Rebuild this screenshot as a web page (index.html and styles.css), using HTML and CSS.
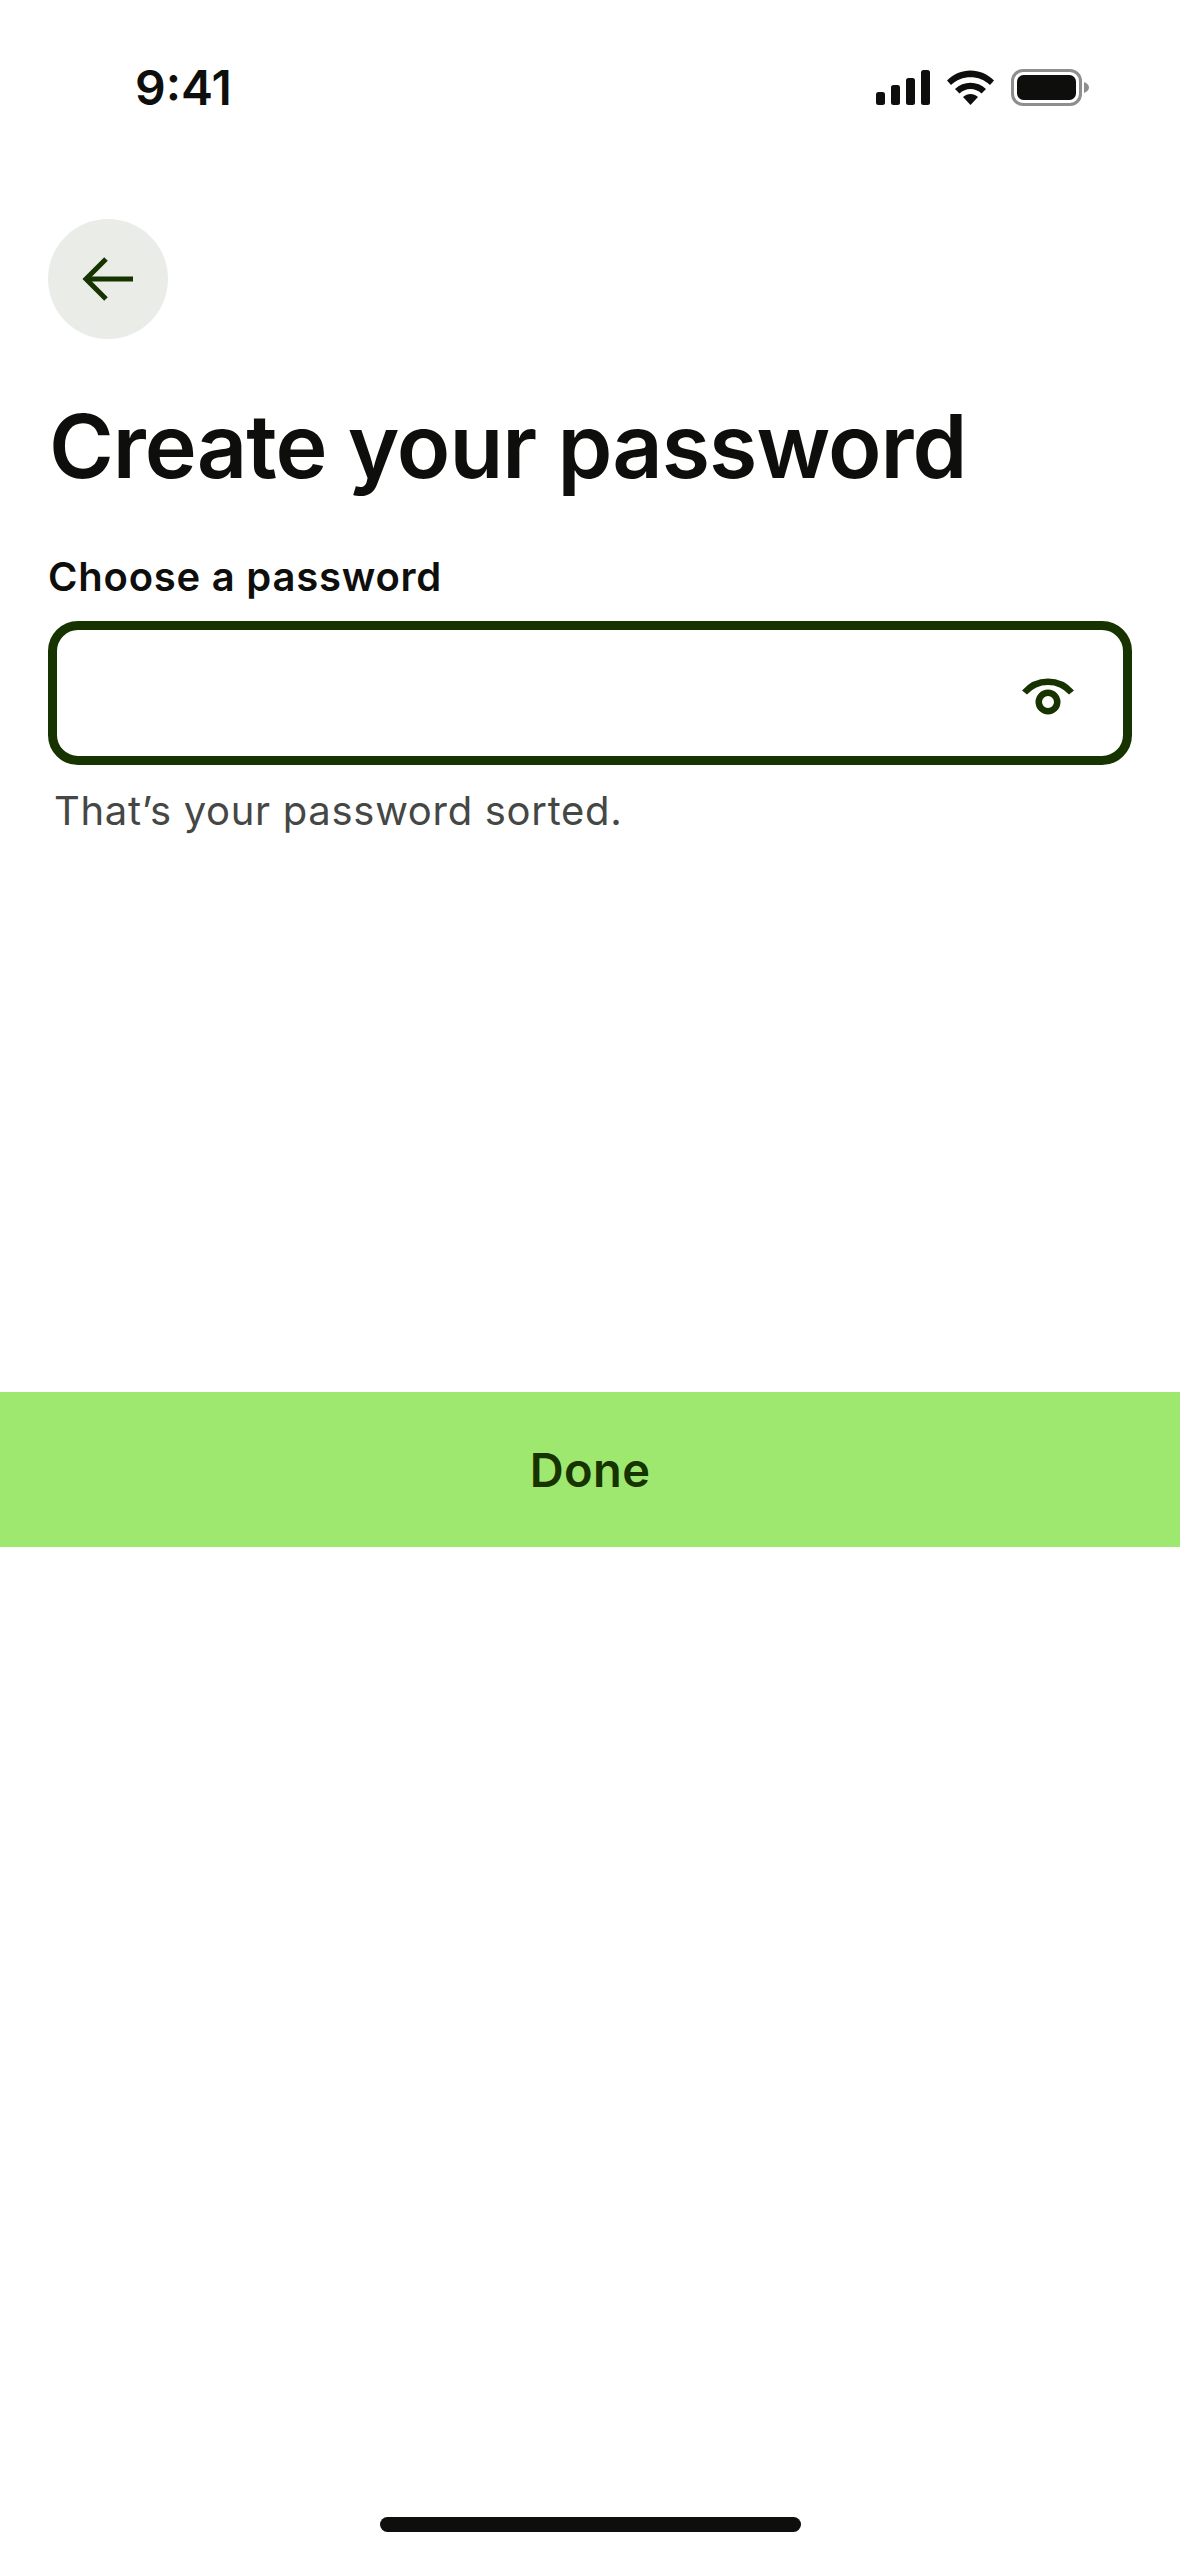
FILE: index.html

```html
<!DOCTYPE html>
<html lang="en">
<head>
  <meta charset="UTF-8">
  <meta name="viewport" content="width=device-width, initial-scale=1.0">
  <title>Create your password</title>
  <link rel="stylesheet" href="styles.css">
</head>
<body>

<div class="screen">
  <!-- Status bar -->
  <div class="status-bar">
    <span class="time">9:41</span>
    <div class="status-icons">
      <svg class="signal" width="54" height="35" viewBox="0 0 54 35">
        <rect x="0" y="22" width="9" height="13" rx="2.500"/>
        <rect x="15" y="15" width="9" height="20" rx="2.500"/>
        <rect x="30" y="8" width="9" height="27" rx="2.500"/>
        <rect x="45" y="0" width="9" height="35" rx="2.500"/>
      </svg>
      <svg class="wifi" width="47" height="35" viewBox="0 0 47 35">
        <path d="M0 10.500 C12.500 -3 34.500 -3 47 10.500 L43 15 C32.500 4.500 14.500 4.500 4 15 Z"/>
        <path d="M8 19 C16.500 10.500 30.500 10.500 39 19 L34.500 23.500 C28.500 17.500 18.500 17.500 12.500 23.500 Z"/>
        <path d="M16 27 C20.500 23 26.500 23 31 27 L23.500 35 Z"/>
      </svg>
      <svg class="battery" width="78" height="37" viewBox="0 0 78 37">
        <rect x="1.500" y="1.500" width="68" height="34" rx="10.500" fill="none" stroke="#8e8e8e" stroke-width="3"/>
        <rect x="6" y="6" width="59" height="25" rx="6.500" fill="#0e0f0c"/>
        <path d="M73 13 C76 14 78 16 78 18.500 C78 21 76 23 73 24 Z" fill="#8e8e8e"/>
      </svg>
    </div>
  </div>

  <div class="content">
    <button class="back-btn">
      <svg width="56" height="48" viewBox="0 0 56 48" fill="none" stroke="#163300" stroke-width="5">
        <path d="M53 24 H7"/>
        <path d="M26 4 L6 24 L26 44"/>
      </svg>
    </button>

    <h1>Create your password</h1>

    <label class="field-label">Choose a password</label>
    <div class="field">
      <svg class="eye" width="54" height="40" viewBox="0 0 54 40" fill="none" stroke="#163300" stroke-width="6.500">
        <path d="M3.500 16.500 C16 2 38 2 50.500 16.500"/>
        <circle cx="27" cy="26" r="9.250"/>
      </svg>
    </div>
    <p class="hint">That’s your password sorted.</p>
  </div>

  <div class="done">Done</div>

  <div class="home-indicator"></div>
</div>

</body>
</html>
```

FILE: styles.css

```css
body {
  margin: 0;
  background: #fff;
  color: #0e0f0c;
  font-family: Inter, 'Liberation Sans', sans-serif;
}
.screen {
  display: flex;
  flex-direction: column;
  height: 2556px;
  overflow: hidden;
}
.status-bar {
  display: flex;
  align-items: center;
  justify-content: space-between;
  height: 174px;
  padding: 0 91px 0 135px;
  box-sizing: border-box;
}
.time {
  font-size: 48px;
  font-weight: 600;
}
.status-icons {
  display: flex;
  align-items: center;
  gap: 17px;
}
.signal, .wifi {
  fill: #0e0f0c;
}
.content {
  display: flex;
  flex-direction: column;
  height: 1218px;
  padding: 45px 48px 0;
  box-sizing: border-box;
}
.back-btn {
  display: flex;
  align-items: center;
  justify-content: center;
  width: 120px;
  height: 120px;
  padding: 0;
  border: 0;
  border-radius: 50%;
  background: #eaece8;
}
h1 {
  margin: 52px 0 0 1px;
  font-size: 88px;
  line-height: 110px;
  font-weight: 600;
  letter-spacing: -1px;
}
.field-label {
  margin-top: 50px;
  font-size: 40px;
  line-height: 52px;
  font-weight: 600;
  letter-spacing: 0.770px;
}
.field {
  display: flex;
  align-items: center;
  justify-content: flex-end;
  height: 144px;
  margin-top: 18px;
  padding-right: 48px;
  box-sizing: border-box;
  border: 9px solid #163300;
  border-radius: 30px;
}
.eye {
  margin-top: 6px;
}
.hint {
  margin: 20px 0 0 6px;
  font-size: 40px;
  line-height: 52px;
  letter-spacing: 0.700px;
  color: #454745;
}
.done {
  display: flex;
  align-items: center;
  justify-content: center;
  height: 155px;
  background: #9fe870;
  color: #163300;
  font-size: 47px;
  font-weight: 600;
  letter-spacing: 0.400px;
}
.home-indicator {
  width: 421px;
  height: 15px;
  margin: 970px auto 0;
  border-radius: 8px;
  background: #0e0f0c;
}
```
